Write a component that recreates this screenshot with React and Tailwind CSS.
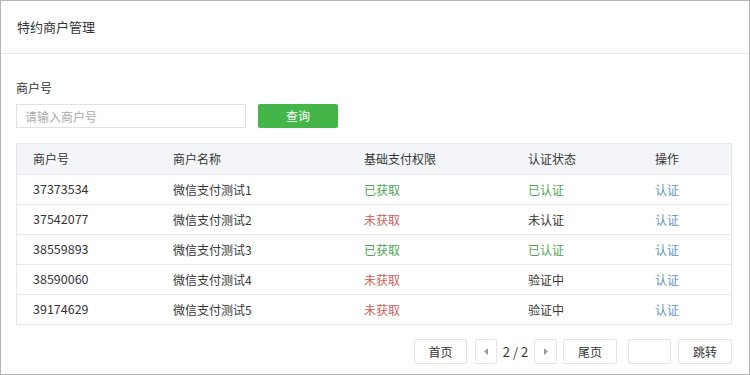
import React from "react";

const rows = [
  { id: "37373534", name: "微信支付测试1", pay: "已获取", payOk: true, auth: "已认证", authState: "ok" },
  { id: "37542077", name: "微信支付测试2", pay: "未获取", payOk: false, auth: "未认证", authState: "none" },
  { id: "38559893", name: "微信支付测试3", pay: "已获取", payOk: true, auth: "已认证", authState: "ok" },
  { id: "38590060", name: "微信支付测试4", pay: "未获取", payOk: false, auth: "验证中", authState: "pending" },
  { id: "39174629", name: "微信支付测试5", pay: "未获取", payOk: false, auth: "验证中", authState: "pending" },
];

const cols = "grid grid-cols-[140px_191px_164px_127px_1fr]";

const PageBtn = ({ className = "", children }) => (
  <div
    className={`h-[25px] flex items-center justify-center bg-white border border-[#e4e4e4] rounded-[2px] text-[12px] text-[#333] ${className}`}
  >
    {children}
  </div>
);

export default function App() {
  return (
    <div
      className="w-[750px] h-[375px] bg-white border border-[#b5b5b5] text-[#353535] overflow-hidden"
      style={{ fontFamily: '"Noto Sans CJK SC", "Noto Sans", sans-serif' }}
    >
      {/* Header */}
      <div className="h-[53px] px-4 flex items-center border-b border-[#e6e6e6]">
        <h1 className="text-[13px] leading-none pb-[2px]">特约商户管理</h1>
      </div>

      <div className="px-[15px] pt-[26px]">
        {/* Search */}
        <div className="text-[12px] leading-4">商户号</div>
        <div className="mt-2 flex items-center gap-3">
          <input
            className="w-[230px] h-6 border border-[#e2e2e2] px-2 text-[12px] outline-none placeholder:text-[#aaa]"
            placeholder="请输入商户号"
          />
          <button className="w-[80px] h-6 rounded-[2px] bg-[#44b549] text-white text-[12px]">查询</button>
        </div>

        {/* Table */}
        <div className="mt-[15px] w-[716px] border border-[#e7e7e7] text-[12px]">
          <div className={`${cols} h-[30px] items-center bg-[#f4f5f9] text-[#353535]`}>
            <div className="pl-4">商户号</div>
            <div className="pl-4">商户名称</div>
            <div className="pl-4">基础支付权限</div>
            <div className="pl-4">认证状态</div>
            <div className="pl-4">操作</div>
          </div>
          {rows.map((r) => (
            <div key={r.id} className={`${cols} h-[30px] items-center border-t border-[#e9e9e9]`}>
              <div className="pl-4 text-[12.5px]">{r.id}</div>
              <div className="pl-4">{r.name}</div>
              <div className={`pl-4 ${r.payOk ? "text-[#52a456]" : "text-[#cc625b]"}`}>{r.pay}</div>
              <div className={`pl-4 ${r.authState === "ok" ? "text-[#52a456]" : "text-[#353535]"}`}>{r.auth}</div>
              <div className="pl-4 text-[#6496c4]">认证</div>
            </div>
          ))}
        </div>

        {/* Pagination */}
        <div className="mt-[14px] w-[716px] flex justify-end items-center">
          <PageBtn className="w-[53px]">首页</PageBtn>
          <PageBtn className="w-[22px] ml-[8px]">
            <svg width="4" height="7" viewBox="0 0 4 7">
              <path d="M4 0 L0 3.5 L4 7 Z" fill="#9a9a9a" />
            </svg>
          </PageBtn>
          <div className="w-[37px] text-center text-[13px] leading-none pb-[1px]">2 / 2</div>
          <PageBtn className="w-[23px]">
            <svg width="4" height="7" viewBox="0 0 4 7">
              <path d="M0 0 L4 3.5 L0 7 Z" fill="#9a9a9a" />
            </svg>
          </PageBtn>
          <PageBtn className="w-[54px] ml-[6px]">尾页</PageBtn>
          <PageBtn className="w-[43px] ml-[11px]" />
          <PageBtn className="w-[54px] ml-[7px]">跳转</PageBtn>
        </div>
      </div>
    </div>
  );
}
